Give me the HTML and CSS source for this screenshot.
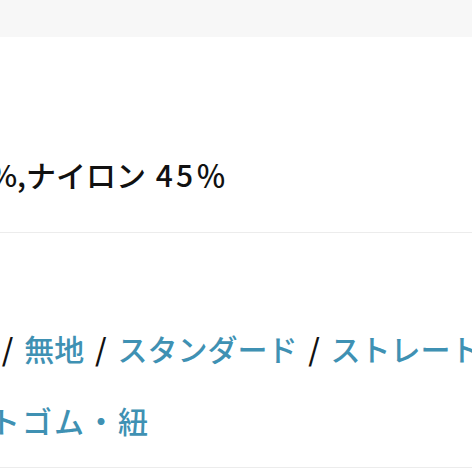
FILE: index.html
```html
<!DOCTYPE html>
<html lang="ja">
<head>
<meta charset="utf-8">
<link rel="stylesheet" href="styles.css">
</head>
<body>
<div class="topbar"></div>
<section class="spec">
  <div class="spec-row material">
    <p class="line line-material">綿 55%,ナイロン <span class="num">45</span>％</p>
  </div>
  <div class="spec-row tags">
    <p class="line line-tags"><a class="tag">ボトム</a><span class="sep"> / </span><a class="tag">無地</a><span class="sep"> / </span><a class="tag">スタンダード</a><span class="sep"> / </span><a class="tag">ストレート</a></p>
    <p class="line line-tags2"><a class="tag">ウエストゴム・紐</a></p>
  </div>
</section>
</body>
</html>
```
FILE: styles.css
```css
html, body {
  margin: 0;
  padding: 0;
  background: #ffffff;
}
body {
  width: 472px;
  height: 472px;
  overflow: hidden;
  font-family: "Noto Sans CJK JP", "Noto Sans", sans-serif;
  font-weight: 500;
  font-size: 30px;
  color: #111111;
}
.topbar {
  height: 37px;
  background: #f7f7f7;
}
.spec-row {
  border-bottom: 1px solid #ececec;
}
.line {
  margin: 0;
  white-space: nowrap;
  line-height: 30px;
}
.material {
  padding-top: 122px;
  height: 73px;
}
.line-material {
  text-indent: -82px;
}
.num {
  margin-left: 3px;
  letter-spacing: 3px;
}
.tags {
  padding-top: 100px;
  height: 134px;
}
.line-tags {
  text-indent: -99px;
}
.line-tags2 {
  margin-top: 42px;
  text-indent: -106px;
  letter-spacing: 2px;
}
.tag {
  color: #3f91b3;
}
.sep {
  color: #111111;
  margin: 0 4px;
}
```
